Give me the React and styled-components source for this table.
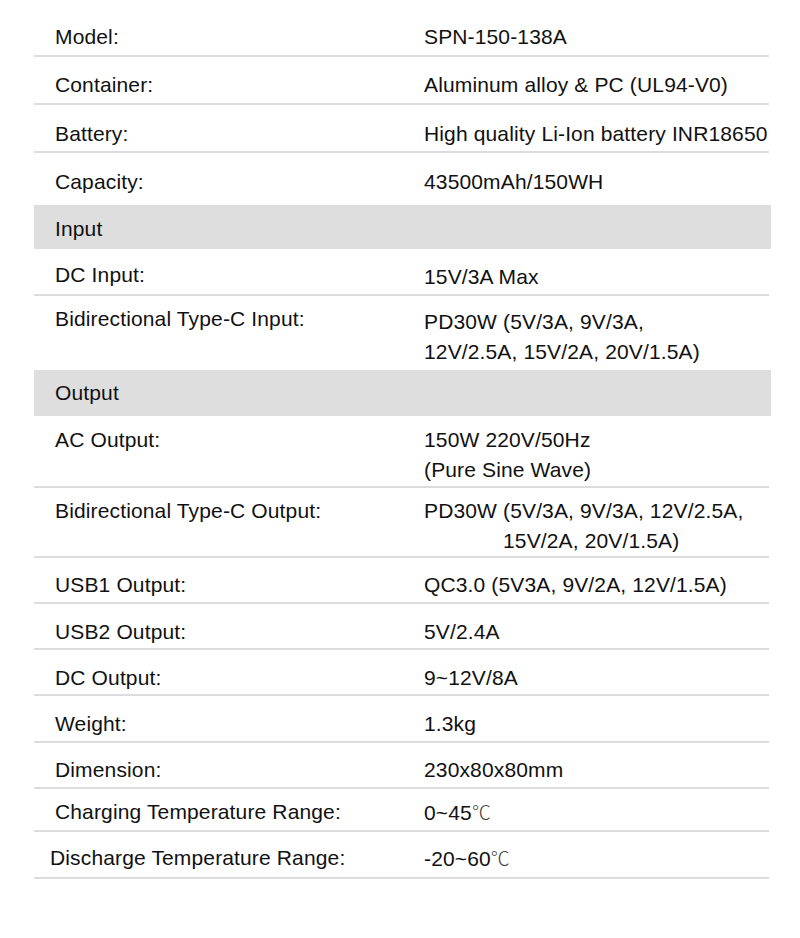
import React from "react";
import styled, { createGlobalStyle } from "styled-components";

const GlobalStyle = createGlobalStyle`
  html, body {
    margin: 0;
    padding: 0;
    background: #fff;
  }
  body {
    font-family: "Liberation Sans", Arial, sans-serif;
    color: #111;
  }
`;

const Page = styled.div`
  width: 800px;
  height: 938px;
  padding: 9px 0 0 34px;
  box-sizing: border-box;
`;

const Table = styled.div`
  width: 735px;
  display: flex;
  flex-direction: column;
`;

const Row = styled.div`
  display: grid;
  grid-template-columns: 390px 1fr;
  box-sizing: border-box;
  height: ${(p) => p.$h}px;
  padding-top: ${(p) => p.$pt}px;
  border-bottom: ${(p) => (p.$line ? "2px solid #dcdcdc" : "none")};
  font-size: 21px;
  line-height: 30px;
  letter-spacing: 0.14px;
`;

const SectionRow = styled(Row)`
  background: #dedede;
  margin-right: -2px;
`;

const Label = styled.div`
  padding-left: ${(p) => 21 + (p.$nudge || 0)}px;
  white-space: nowrap;
`;

const Value = styled.div`
  padding-top: ${(p) => p.$shift || 0}px;
  white-space: nowrap;
`;

const Line = styled.div`
  padding-left: ${(p) => p.$indent || 0}px;
`;

const Degree = styled.span`
  font-family: "Noto Sans CJK SC", "DejaVu Sans", sans-serif;
  font-weight: 300;
  font-size: 19px;
  color: #444;
`;

const C = () => <Degree>℃</Degree>;

const rows = [
  { label: "Model:", value: ["SPN-150-138A"], h: 48, pt: 13, line: true },
  { label: "Container:", value: ["Aluminum alloy & PC (UL94-V0)"], h: 48, pt: 13, line: true },
  { label: "Battery:", value: ["High quality Li-Ion battery INR18650"], h: 48, pt: 14, line: true },
  { label: "Capacity:", value: ["43500mAh/150WH"], h: 52, pt: 14 },
  { section: "Input", h: 44, pt: 9 },
  { label: "DC Input:", value: ["15V/3A Max"], h: 47, pt: 11, shift: 2, line: true },
  {
    label: "Bidirectional Type-C Input:",
    value: ["PD30W (5V/3A, 9V/3A,", "12V/2.5A, 15V/2A, 20V/1.5A)"],
    h: 74,
    pt: 8,
    shift: 3,
  },
  { section: "Output", h: 46, pt: 8 },
  {
    label: "AC Output:",
    value: ["150W 220V/50Hz", "(Pure Sine Wave)"],
    h: 72,
    pt: 9,
    line: true,
  },
  {
    label: "Bidirectional Type-C Output:",
    value: ["PD30W (5V/3A, 9V/3A, 12V/2.5A,", "15V/2A, 20V/1.5A)"],
    indent: 79,
    h: 70,
    pt: 8,
    line: true,
  },
  { label: "USB1 Output:", value: ["QC3.0 (5V3A, 9V/2A, 12V/1.5A)"], h: 46, pt: 12, line: true },
  { label: "USB2 Output:", value: ["5V/2.4A"], h: 46, pt: 13, line: true },
  { label: "DC Output:", value: ["9~12V/8A"], h: 46, pt: 13, line: true },
  { label: "Weight:", value: ["1.3kg"], h: 47, pt: 13, line: true },
  { label: "Dimension:", value: ["230x80x80mm"], h: 46, pt: 12, line: true },
  {
    label: "Charging Temperature Range:",
    value: [
      <>
        0~45
        <C />
      </>,
    ],
    h: 43,
    pt: 8,
    line: true,
  },
  {
    label: "Discharge Temperature Range:",
    value: [
      <>
        -20~60
        <C />
      </>,
    ],
    nudge: -5,
    h: 47,
    pt: 11,
    line: true,
  },
];

export default function App() {
  return (
    <>
      <GlobalStyle />
      <Page>
        <Table>
          {rows.map((r, i) =>
            r.section ? (
              <SectionRow key={i} $h={r.h} $pt={r.pt}>
                <Label>{r.section}</Label>
              </SectionRow>
            ) : (
              <Row key={i} $h={r.h} $pt={r.pt} $line={r.line}>
                <Label $nudge={r.nudge}>{r.label}</Label>
                <Value $shift={r.shift}>
                  {r.value.map((v, j) => (
                    <Line key={j} $indent={j > 0 ? r.indent : 0}>
                      {v}
                    </Line>
                  ))}
                </Value>
              </Row>
            )
          )}
        </Table>
      </Page>
    </>
  );
}
